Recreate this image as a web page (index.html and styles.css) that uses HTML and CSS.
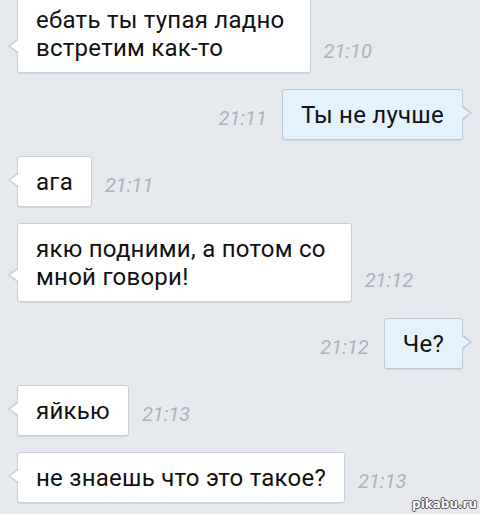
FILE: index.html
```html
<!DOCTYPE html>
<html lang="ru">

<head>
    <meta charset="UTF-8">
    <meta name="viewport" content="width=device-width, initial-scale=1.0">
    <title>Чат</title>
    <link rel="stylesheet" href="styles.css">
</head>

<body>
    <div class="chat">
        <div class="msg">
            <div class="bubble bubble--multi">ебать ты тупая ладно<br>встретим как-то</div>
            <span class="msg__time">21:10</span>
        </div>
        <div class="msg msg--out">
            <div class="bubble">Ты не лучше</div>
            <span class="msg__time">21:11</span>
        </div>
        <div class="msg">
            <div class="bubble">ага</div>
            <span class="msg__time">21:11</span>
        </div>
        <div class="msg">
            <div class="bubble bubble--multi">якю подними, а потом со<br>мной говори!</div>
            <span class="msg__time">21:12</span>
        </div>
        <div class="msg msg--out">
            <div class="bubble">Че?</div>
            <span class="msg__time">21:12</span>
        </div>
        <div class="msg">
            <div class="bubble">яйкью</div>
            <span class="msg__time">21:13</span>
        </div>
        <div class="msg">
            <div class="bubble">не знаешь что это такое?</div>
            <span class="msg__time">21:13</span>
        </div>
    </div>
    <span class="watermark">pikabu.ru</span>
</body>

</html>
```

FILE: styles.css
```css
body {
    margin: 0;
    height: 514px;
    overflow: hidden;
    background-color: #e6eaef;
    font-family: Roboto, "Noto Sans", sans-serif;
    color: #111;
}

.chat {
    margin-top: -6px;
    padding: 0 17px;
    display: flex;
    flex-direction: column;
    gap: 16px;
}

.msg {
    display: flex;
    align-items: flex-end;
    gap: 13px;
}

.msg--out {
    flex-direction: row-reverse;
    gap: 15px;
}

.bubble {
    position: relative;
    padding: 11px 18px 10px 18px;
    font-size: 24px;
    line-height: 28px;
    letter-spacing: 0.25px;
    background-color: #fff;
    border: 1px solid #c8cfd8;
    border-radius: 3px;
    box-shadow: 0 1px 1px rgba(0, 0, 0, 0.08);
    white-space: nowrap;
}

.bubble--multi {
    padding-right: 25px;
}

/* the little tail on the side of a bubble */
.bubble::before,
.bubble::after {
    content: '';
    position: absolute;
    width: 10px;
    clip-path: polygon(100% 0, 0 50%, 100% 100%);
}

.bubble::before {
    left: -10px;
    bottom: 18px;
    height: 16px;
    background-color: #c8cfd8;
}

.bubble::after {
    left: -8px;
    bottom: 19px;
    height: 14px;
    background-color: #fff;
}

.msg--out .bubble {
    background-color: #e4f2fd;
    border-color: #bccad8;
}

.msg--out .bubble::before,
.msg--out .bubble::after {
    left: auto;
    clip-path: polygon(0 0, 100% 50%, 0 100%);
}

.msg--out .bubble::before {
    right: -10px;
    background-color: #bccad8;
}

.msg--out .bubble::after {
    right: -8px;
    background-color: #e4f2fd;
}

.msg__time {
    margin-bottom: 10px;
    font-size: 20px;
    line-height: 24px;
    font-style: italic;
    color: #abb3be;
}

.watermark {
    position: absolute;
    right: 3px;
    bottom: 3px;
    font-family: "DejaVu Sans", sans-serif;
    font-size: 12px;
    font-weight: bold;
    color: #fff;
    text-shadow: 1px 0 #555, -1px 0 #555, 0 1px #555, 0 -1px #555;
}
```
